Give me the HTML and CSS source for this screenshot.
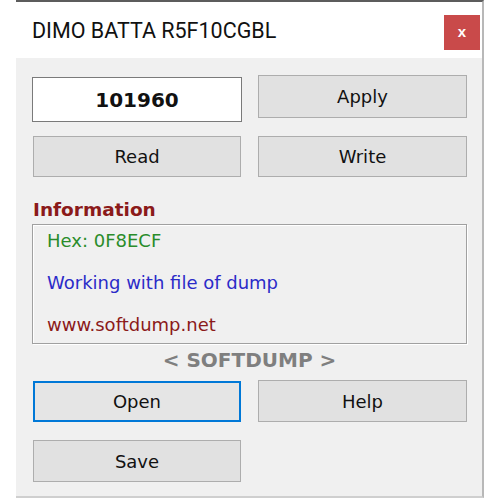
FILE: index.html
```
<!DOCTYPE html>
<html>
<head>
<meta charset="utf-8">
<link rel="stylesheet" href="styles.css">
</head>
<body>
<div class="window">
  <div class="titlebar">
    <span class="title">DIMO BATTA R5F10CGBL</span>
    <span class="close">x</span>
  </div>
  <div class="client">
    <div class="row row1">
      <div class="input">101960</div>
      <div class="btn apply">Apply</div>
    </div>
    <div class="row row2">
      <div class="btn left">Read</div>
      <div class="btn">Write</div>
    </div>
    <div class="label">Information</div>
    <div class="infobox">
      <div class="line green">Hex: 0F8ECF</div>
      <div class="line blue">Working with file of dump</div>
      <div class="line red">www.softdump.net</div>
    </div>
    <div class="brand">&lt; SOFTDUMP &gt;</div>
    <div class="row row3">
      <div class="btn left focused">Open</div>
      <div class="btn tall">Help</div>
    </div>
    <div class="row row4">
      <div class="btn left tall">Save</div>
    </div>
  </div>
</div>
</body>
</html>
```
FILE: styles.css
```
html, body {
  margin: 0;
  padding: 0;
  background: #ffffff;
}

.window {
  margin-left: 16px;
  width: 468px;
  box-sizing: border-box;
  border-top: 2px solid #5c5c5c;
  border-right: 2px solid #b8b8b8;
  border-bottom: 2px solid #cfcfcf;
}

.titlebar {
  height: 56px;
  display: flex;
  justify-content: space-between;
  align-items: center;
  padding-left: 16px;
  padding-right: 2px;
  background: #ffffff;
}

.title {
  font-family: Roboto, "Liberation Sans", sans-serif;
  font-size: 21.5px;
  color: #111;
}

.close {
  align-self: flex-start;
  margin-top: 13px;
  width: 36px;
  height: 35px;
  background: #c94a4a;
  color: #fff;
  font-family: "Liberation Sans", sans-serif;
  font-weight: bold;
  font-size: 15px;
  display: flex;
  align-items: center;
  justify-content: center;
  line-height: 1;
  padding-bottom: 2px;
  box-sizing: border-box;
}

.client {
  background: #f0f0f0;
  height: 438px;
  box-sizing: border-box;
  padding: 17px 15px 0 16px;
}

.row {
  display: grid;
  grid-template-columns: 210px 209px;
  column-gap: 16px;
  align-items: start;
}

.row2 { margin-top: 14px; }
.row3 { margin-top: 9px; }
.row4 { margin-top: 18px; }

.btn {
  height: 41px;
  box-sizing: border-box;
  background: #e1e1e1;
  border: 1px solid #adadad;
  display: flex;
  align-items: center;
  justify-content: center;
  font-family: "DejaVu Sans", sans-serif;
  font-size: 18px;
  color: #111;
}

.btn.left {
  margin-left: 1px;
  width: 208px;
}

.apply { height: 43px; }
.tall { height: 42px; }

.btn.focused {
  border: 2px solid #0078d7;
  background: #e5e5e5;
  margin-top: 1px;
  height: 41px;
}

.input {
  margin-top: 2px;
  height: 45px;
  box-sizing: border-box;
  background: #ffffff;
  border: 1px solid #7a7a7a;
  display: flex;
  align-items: center;
  justify-content: center;
  font-family: "DejaVu Sans", sans-serif;
  font-weight: bold;
  font-size: 20px;
  color: #111;
}

.label {
  margin-top: 22px;
  line-height: 22px;
  font-family: "DejaVu Sans", sans-serif;
  font-weight: bold;
  font-size: 18.5px;
  color: #8b1a1a;
  padding-left: 1px;
}

.infobox {
  margin-top: 3px;
  height: 120px;
  box-sizing: border-box;
  border: 1px solid #a0a0a0;
  box-shadow: inset 1px 1px 0 #ffffff, 1px 1px 0 #ffffff;
  padding: 4px 0 0 14px;
  display: flex;
  flex-direction: column;
  gap: 18px;
}

.line {
  font-family: "DejaVu Sans", sans-serif;
  font-size: 18px;
  line-height: 24px;
}

.green { color: #2a8c2a; }
.blue { color: #2b2bc8; }
.red { color: #8b1a1a; }

.brand {
  margin-top: 5px;
  line-height: 22px;
  text-align: center;
  font-family: "DejaVu Sans", sans-serif;
  font-weight: bold;
  font-size: 20px;
  color: #7f7f7f;
}
```
